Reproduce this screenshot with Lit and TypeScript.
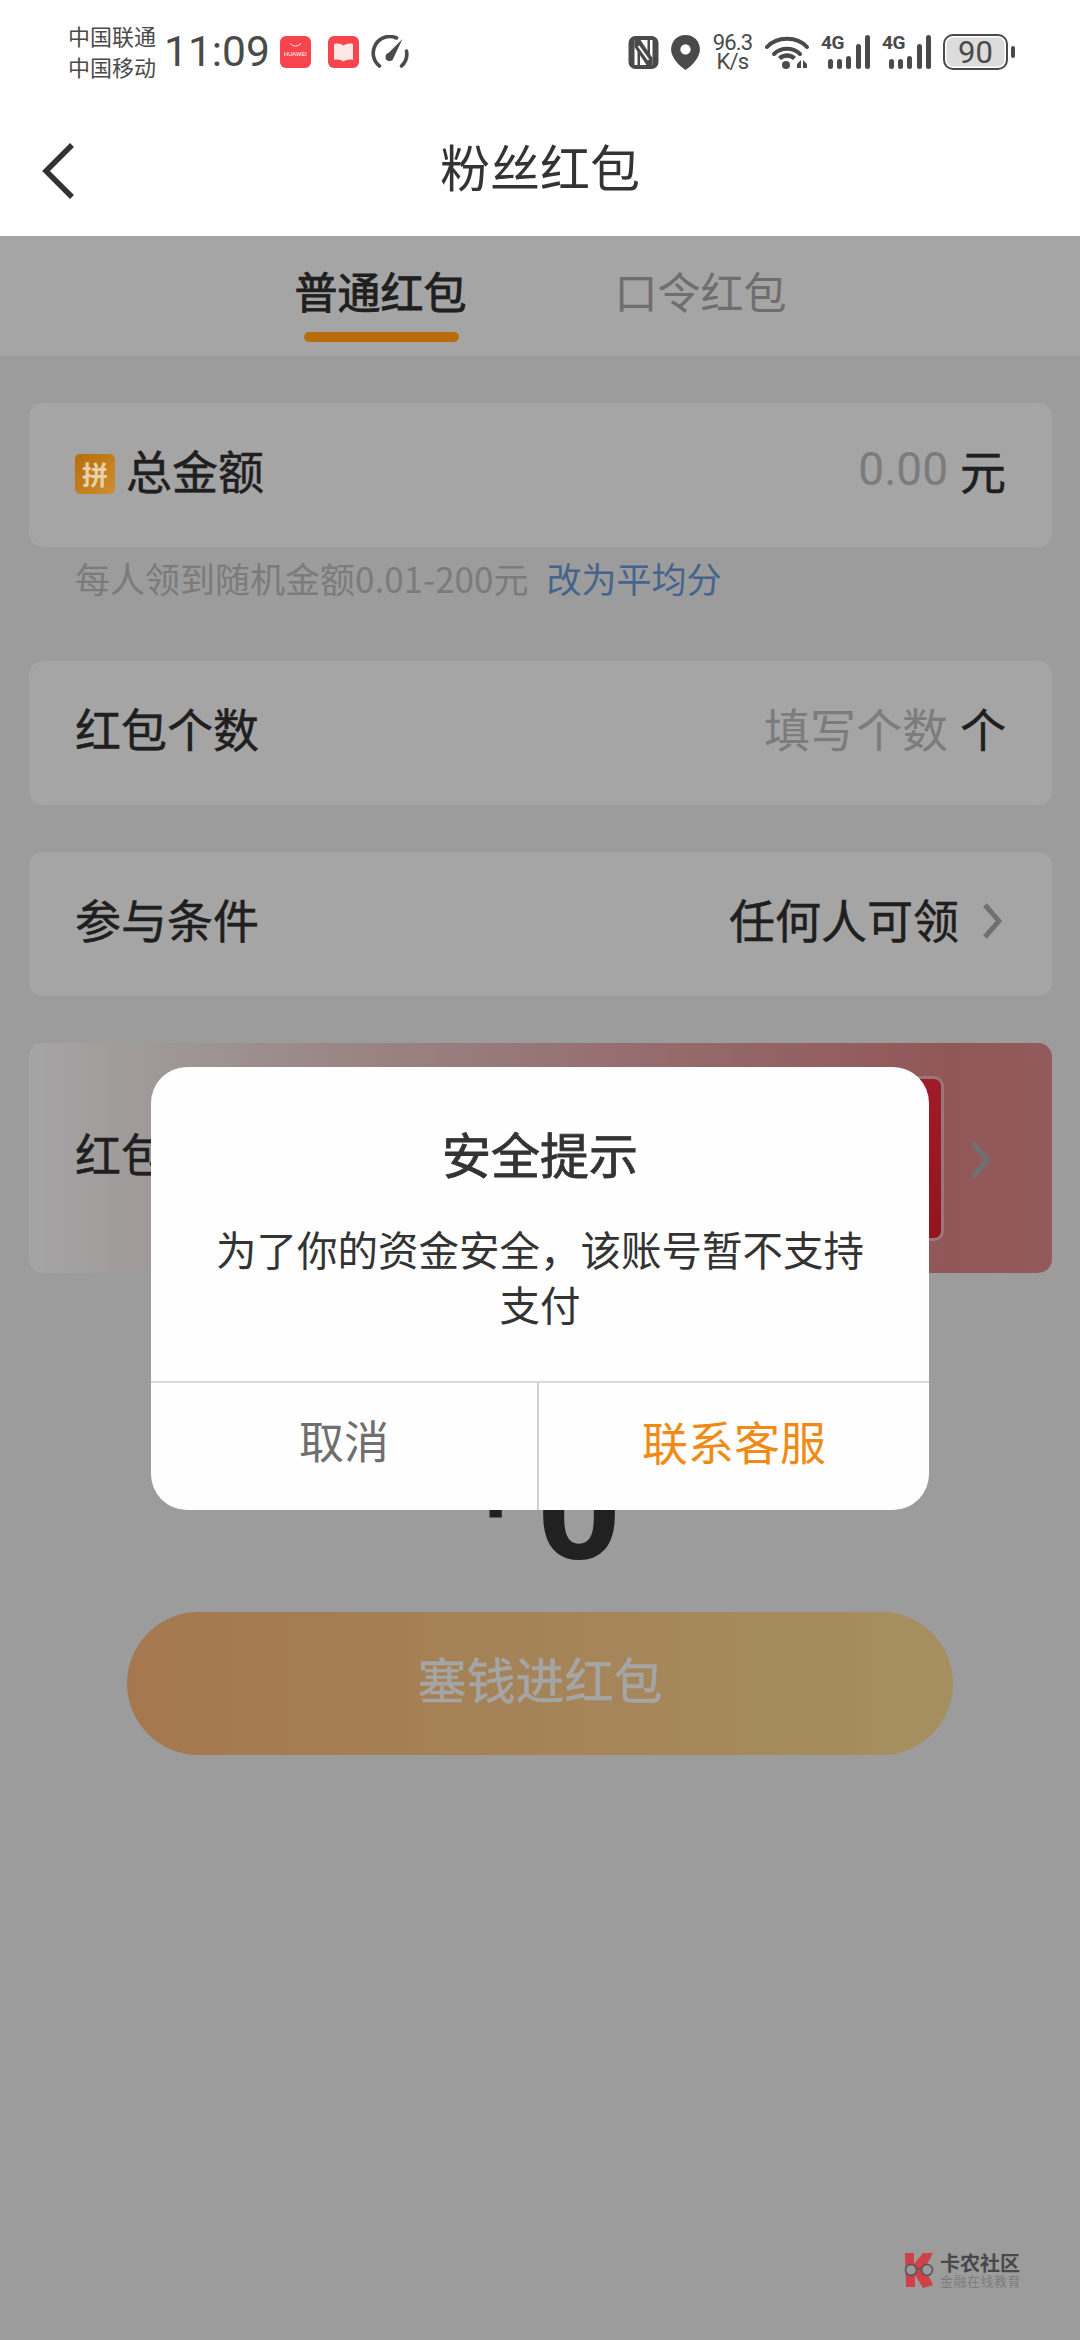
import { LitElement, css, html, svg } from "lit";
import { customElement } from "lit/decorators.js";

const signal = (label: string) => html`
  <span class="signal">
    <span class="signal-label">${label}</span>
    <svg width="49" height="34" viewBox="0 0 49 34">
      <g fill="#4a4a4a">
        <rect x="7" y="24" width="5" height="10" rx="2.5"></rect>
        <rect x="16" y="24" width="5" height="10" rx="2.5"></rect>
        <rect x="25" y="21" width="5" height="13" rx="2.5"></rect>
        <rect x="35" y="9" width="5" height="25" rx="2.5"></rect>
        <rect x="44" y="0" width="5" height="34" rx="2.5"></rect>
      </g>
    </svg>
  </span>
`;

const chevron = (w: number, h: number) => svg`
  <svg class="chevron" width=${w} height=${h} viewBox="0 0 20 36">
    <path d="M3 2 L17 18 L3 34" fill="none" stroke="currentColor" stroke-width="5"></path>
  </svg>
`;

@customElement("app-root")
export class AppRoot extends LitElement {
  static styles = css`
    :host {
      display: block;
      width: 1080px;
      height: 2340px;
      overflow: hidden;
      background: #fff;
      font-family: "Noto Sans CJK SC", "Liberation Sans", sans-serif;
      color: #303030;
    }

    .status {
      display: flex;
      align-items: center;
      height: 104px;
      padding: 0 65px 0 68px;
      box-sizing: border-box;
      color: #4a4a4a;
    }

    .carriers {
      display: flex;
      flex-direction: column;
      margin-top: -2px;
      font-size: 22px;
      line-height: 31px;
      width: 96px;
    }

    .time {
      font-family: Roboto, sans-serif;
      font-size: 42.5px;
      line-height: 1;
      width: 116px;
    }

    .left-icons,
    .right-icons {
      display: flex;
      align-items: center;
    }

    .left-icons {
      gap: 17px;
    }

    .right-icons {
      margin-left: auto;
      gap: 12px;
    }

    .gauge {
      margin-left: -5px;
    }

    .speed {
      display: flex;
      flex-direction: column;
      align-items: center;
      font-family: Roboto, sans-serif;
      font-size: 22px;
      line-height: 19px;
      letter-spacing: -0.8px;
      width: 41px;
    }

    .signal {
      position: relative;
      display: block;
      width: 49px;
      height: 34px;
    }

    .signal svg {
      display: block;
    }

    .signal-label {
      position: absolute;
      left: 0;
      top: -2px;
      font-family: Roboto, sans-serif;
      font-weight: 700;
      font-size: 19px;
      line-height: 20px;
      letter-spacing: -0.5px;
    }

    .battery {
      display: flex;
      align-items: center;
      gap: 3px;
    }

    .battery-body {
      display: flex;
      align-items: center;
      justify-content: center;
      width: 65px;
      height: 36px;
      box-sizing: border-box;
      border: 2.5px solid #4a4a4a;
      border-radius: 10px;
      background: #dcdcdc;
      box-shadow: inset 0 0 0 1.5px #fff;
      font-family: Roboto, sans-serif;
      font-size: 31px;
      line-height: 1;
    }

    .battery-tip {
      width: 4px;
      height: 12px;
      border-radius: 2px;
      background: #4a4a4a;
    }

    .header {
      position: relative;
      display: flex;
      align-items: center;
      justify-content: center;
      height: 132px;
      padding-bottom: 10px;
      box-sizing: border-box;
      font-size: 50px;
      line-height: 1;
      color: #333;
    }

    .back {
      position: absolute;
      left: 40px;
      top: 38px;
    }

    .main {
      position: relative;
      height: 2104px;
      background: #f1f1f1;
    }

    .tabs {
      display: flex;
      justify-content: center;
      gap: 148px;
      height: 120px;
      padding-left: 1px;
      box-sizing: border-box;
      background: #fff;
    }

    .tab {
      position: relative;
      padding-top: 26px;
      font-size: 43px;
      line-height: 56px;
      color: #aaa;
    }

    .tab.active {
      color: #303030;
      -webkit-text-stroke: 0.9px #303030;
    }

    /* brighter than the scrim would allow, so it sits above it */
    .tab.active::after {
      content: "";
      position: absolute;
      z-index: 1;
      left: 9px;
      right: 8px;
      top: 96px;
      height: 10px;
      border-radius: 5px;
      background: #b86c0a;
    }

    .form {
      display: flex;
      flex-direction: column;
      padding: 47px 28px 0 29px;
    }

    .row {
      display: flex;
      align-items: center;
      justify-content: space-between;
      height: 144px;
      padding: 0 46px 12px;
      box-sizing: border-box;
      border-radius: 14px;
      background: #fff;
      font-size: 46px;
      line-height: 1;
      margin-bottom: 47px;
      -webkit-text-stroke: 0.5px #303030;
    }

    .row-label,
    .row-value {
      display: flex;
      align-items: center;
    }

    .badge {
      position: relative;
      z-index: 1;
      display: flex;
      align-items: center;
      justify-content: center;
      width: 40px;
      height: 40px;
      margin: 10px 11px 0 0;
      border-radius: 5px;
      background: linear-gradient(135deg, #b86c0a, #cf8f30);
      font-size: 26px;
      font-weight: 700;
      color: #e8d2ac;
      -webkit-text-stroke: 0;
    }

    .placeholder {
      color: #c0c0c0;
      margin-right: 12px;
      -webkit-text-stroke: 0;
    }

    .number {
      font-family: Roboto, sans-serif;
      font-weight: 400;
    }

    .chevron {
      display: block;
      color: #adadad;
    }

    .row-value .chevron {
      margin: 6px 4px 0 23px;
    }

    .row.first {
      margin-bottom: 0;
    }

    .hint {
      display: flex;
      gap: 18px;
      align-items: center;
      height: 114px;
      padding: 0 46px 54px;
      box-sizing: border-box;
      font-size: 35px;
      color: #bebebe;
    }

    .hint-link {
      color: #6a9bd9;
    }

    .row.cover {
      position: relative;
      height: 230px;
      margin-bottom: 0;
      background: linear-gradient(90deg, #fff 0%, #f7efef 10%, #efd0d0 30%, #e9b5b6 50%, #e59c9e 70%, #e18789 90%, #e38c8f 100%);
    }

    .thumb {
      position: absolute;
      right: 108px;
      top: 33px;
      width: 200px;
      height: 165px;
      box-sizing: border-box;
      border: 3px solid #eab8bb;
      border-radius: 10px;
      background: linear-gradient(170deg, #fb2b40 0%, #f5293c 30%, #e4202f 100%);
    }

    .row.cover .chevron {
      position: absolute;
      right: 61px;
      top: 98px;
    }

    .amount {
      display: flex;
      justify-content: center;
      align-items: center;
      height: 150px;
      margin-top: 160px;
      padding-left: 14px;
      font-family: Roboto, sans-serif;
      font-weight: 700;
      line-height: 1;
      color: #333;
    }

    .amount-sign {
      font-size: 84px;
      margin: 0 18px 36px 0;
    }

    .amount-value {
      font-size: 149px;
    }

    .submit {
      display: flex;
      align-items: center;
      justify-content: center;
      align-self: center;
      width: 826px;
      height: 143px;
      padding-bottom: 12px;
      box-sizing: border-box;
      margin-top: 29px;
      margin-left: -1px;
      border-radius: 72px;
      background: linear-gradient(90deg, #ffb97a, #ffde96);
      color: #fff;
      font-size: 49px;
      line-height: 1;
      -webkit-text-stroke: 0.5px #fff;
    }

    .scrim {
      position: absolute;
      inset: 0;
      background: rgba(0, 0, 0, 0.353);
    }

    .dialog {
      position: absolute;
      z-index: 2;
      left: 151px;
      top: 831px;
      width: 778px;
      height: 443px;
      display: flex;
      flex-direction: column;
      border-radius: 36px;
      background: #fefefe;
      overflow: hidden;
    }

    .dialog-title {
      padding-top: 52px;
      font-size: 49px;
      line-height: 68px;
      text-align: center;
      color: #333;
      -webkit-text-stroke: 0.8px #333;
    }

    .dialog-body {
      flex: 1;
      margin-top: 34px;
      padding: 0 60px;
      font-size: 40.5px;
      line-height: 55px;
      text-align: center;
      color: #333;
    }

    .dialog-actions {
      display: flex;
      height: 127px;
      border-top: 2px solid #d9d9d9;
      font-size: 45px;
      line-height: 1;
    }

    .action {
      display: flex;
      align-items: center;
      justify-content: center;
      padding-bottom: 14px;
      box-sizing: border-box;
    }

    .action.cancel {
      width: 388px;
      border-right: 2px solid #d0d0d0;
      color: #6f6f6f;
    }

    .action.confirm {
      flex: 1;
      font-size: 46px;
      color: #f08a14;
    }

    .watermark {
      position: absolute;
      left: 903px;
      top: 2016px;
      display: flex;
      gap: 5px;
      align-items: center;
    }

    .watermark-text {
      display: flex;
      flex-direction: column;
      width: 80px;
    }

    .watermark-name {
      font-size: 20px;
      font-weight: 700;
      line-height: 22px;
      color: #484848;
      white-space: nowrap;
    }

    .watermark-sub {
      font-size: 13px;
      line-height: 14px;
      letter-spacing: 0.5px;
      color: #7c7c7c;
      white-space: nowrap;
    }
  `;

  private renderStatus() {
    return html`
      <div class="status">
        <div class="carriers"><span>中国联通</span><span>中国移动</span></div>
        <div class="time">11:09</div>
        <div class="left-icons">
          <svg width="31" height="32" viewBox="0 0 31 32">
            <rect width="31" height="32" rx="6" fill="#f8444c"></rect>
            <path d="M10 7 C12 11 19 11 21 7" fill="none" stroke="#fff" stroke-width="0.8"></path>
            <text x="15.5" y="20" text-anchor="middle" font-family="Liberation Sans" font-size="5.8" fill="#fff">HUAWEI</text>
          </svg>
          <svg width="31" height="32" viewBox="0 0 31 32">
            <rect width="31" height="32" rx="6" fill="#f8444c"></rect>
            <path d="M6 8 C10 7 13 8 15.5 9.5 C18 8 21 7 25 8 V24 C21 23 18 24 15.5 25.5 C13 24 10 23 6 24 Z" fill="#fde6e6"></path>
          </svg>
          <svg class="gauge" width="39" height="34" viewBox="0 0 38 34">
            <path d="M8 31 A16.5 16.5 0 0 1 25 3" fill="none" stroke="#4a4a4a" stroke-width="3.6" stroke-linecap="round"></path>
            <path d="M30 31 A16.5 16.5 0 0 0 35 16" fill="none" stroke="#4a4a4a" stroke-width="3.6" stroke-linecap="round"></path>
            <path d="M16 19 L31 4 L22 23 Z" fill="#4a4a4a"></path>
            <circle cx="18" cy="22" r="4" fill="#4a4a4a"></circle>
          </svg>
        </div>
        <div class="right-icons">
          <svg width="31" height="33" viewBox="0 0 30 33">
            <rect width="30" height="33" rx="7" fill="#4a4a4a"></rect>
            <rect x="6" y="4" width="18" height="25" fill="#fff"></rect>
            <path d="M6 4 H12 L24 22 V29 H18 L6 11 Z" fill="#4a4a4a"></path>
            <path d="M10 10 L20 24" stroke="#fff" stroke-width="2"></path>
            <rect x="9" y="14" width="2.5" height="15" fill="#4a4a4a"></rect>
            <rect x="19" y="4" width="2.5" height="15" fill="#4a4a4a"></rect>
          </svg>
          <svg width="29" height="35" viewBox="0 0 28 34">
            <path d="M14 0 C22 0 28 6 28 14 C28 22 20 30 14 34 C8 30 0 22 0 14 C0 6 6 0 14 0 Z" fill="#4a4a4a"></path>
            <circle cx="14" cy="14" r="5" fill="#fff"></circle>
          </svg>
          <div class="speed"><span>96.3</span><span>K/s</span></div>
          <svg width="44" height="34" viewBox="0 0 44 34">
            <g fill="none" stroke="#4a4a4a" stroke-width="4" stroke-linecap="round">
              <path d="M2 12 C12 1 32 1 42 12"></path>
              <path d="M9 19 C16 12 28 12 35 19"></path>
            </g>
            <path d="M13 22 C18 17 26 17 31 22 L28 25 C24 22 20 22 16 25 Z" fill="#4a4a4a"></path>
            <circle cx="21" cy="30" r="4" fill="#4a4a4a"></circle>
            <path d="M32 29 L36 25 V33 H32 Z M38 25 L42 29 V33 H38 Z" fill="#4a4a4a"></path>
          </svg>
          ${signal("4G")} ${signal("4G")}
          <div class="battery">
            <div class="battery-body">90</div>
            <div class="battery-tip"></div>
          </div>
        </div>
      </div>
    `;
  }

  render() {
    return html`
      ${this.renderStatus()}
      <div class="header">
        <svg class="back" width="36" height="58" viewBox="0 0 36 58">
          <path d="M32 3 L6 29 L32 55" fill="none" stroke="#333" stroke-width="5.5"></path>
        </svg>
        粉丝红包
      </div>
      <div class="main">
        <div class="tabs">
          <div class="tab active">普通红包</div>
          <div class="tab">口令红包</div>
        </div>
        <div class="form">
          <div class="row first">
            <div class="row-label"><span class="badge">拼</span>总金额</div>
            <div class="row-value">
              <span class="placeholder number">0.00</span>元
            </div>
          </div>
          <div class="hint">
            <span>每人领到随机金额0.01-200元</span>
            <span class="hint-link">改为平均分</span>
          </div>
          <div class="row">
            <div class="row-label">红包个数</div>
            <div class="row-value"><span class="placeholder">填写个数</span>个</div>
          </div>
          <div class="row">
            <div class="row-label">参与条件</div>
            <div class="row-value">任何人可领${chevron(20, 36)}</div>
          </div>
          <div class="row cover">
            <div class="row-label">红包封面</div>
            <div class="thumb"></div>
            ${chevron(22, 38)}
          </div>
          <div class="amount">
            <span class="amount-sign">¥</span>
            <span class="amount-value">0</span>
          </div>
          <div class="submit">塞钱进红包</div>
        </div>
        <div class="scrim"></div>
        <div class="dialog">
          <div class="dialog-title">安全提示</div>
          <div class="dialog-body">为了你的资金安全，该账号暂不支持支付</div>
          <div class="dialog-actions">
            <div class="action cancel">取消</div>
            <div class="action confirm">联系客服</div>
          </div>
        </div>
        <div class="watermark">
          <svg width="32" height="36" viewBox="0 0 32 36">
            <path d="M2 1 H11 V12 L20 1 H30 L22 16 L30 33 L20 36 L12 23 V35 H3 Z" fill="#cf4049"></path>
            <path d="M13 17 H19" stroke="#555" stroke-width="1.5"></path>
            <circle cx="8" cy="18" r="5.5" fill="#9a9a9a" stroke="#555" stroke-width="1.5"></circle>
            <circle cx="24" cy="18" r="5.5" fill="#9a9a9a" stroke="#555" stroke-width="1.5"></circle>
          </svg>
          <div class="watermark-text">
            <span class="watermark-name">卡农社区</span>
            <span class="watermark-sub">金融在线教育</span>
          </div>
        </div>
      </div>
    `;
  }
}
